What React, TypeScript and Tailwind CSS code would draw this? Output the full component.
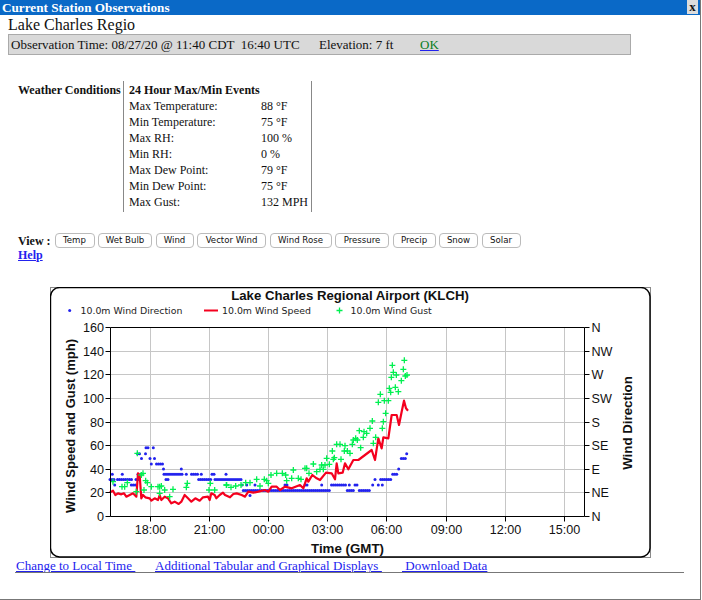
const serif = "font-['Liberation_Serif','Times_New_Roman',serif]";

const events = [
  ["Max Temperature:", "88 °F"],
  ["Min Temperature:", "75 °F"],
  ["Max RH:", "100 %"],
  ["Min RH:", "0 %"],
  ["Max Dew Point:", "79 °F"],
  ["Min Dew Point:", "75 °F"],
  ["Max Gust:", "132 MPH"],
];

const views = [
  { label: "Temp", width: "w-[40px]" },
  { label: "Wet Bulb", width: "w-[54px]" },
  { label: "Wind", width: "w-[38px]" },
  { label: "Vector Wind", width: "w-[69px]" },
  { label: "Wind Rose", width: "w-[62px]" },
  { label: "Pressure", width: "w-[54px]" },
  { label: "Precip", width: "w-[43px]" },
  { label: "Snow", width: "w-[39px]" },
  { label: "Solar", width: "w-[39px]" },
];

// plot coordinates are in page pixels, the svg viewBox starts at the card corner
const plot = { left: 110.5, right: 584.5, top: 327.5, bottom: 516.5 };
const hLines = [327.5, 351.5, 374.5, 398.5, 422.5, 445.5, 469.5, 492.5, 516.5];
const hours = [
  [150.5, "18:00"],
  [209.5, "21:00"],
  [268.5, "00:00"],
  [327.5, "03:00"],
  [386.5, "06:00"],
  [446.5, "09:00"],
  [505.5, "12:00"],
  [564.5, "15:00"],
] as const;
const speedLabels = ["160", "140", "120", "100", "80", "60", "40", "20", "0"];
const dirLabels = ["N", "NW", "W", "SW", "S", "SE", "E", "NE", "N"];

// wind direction: y, then runs of x start/end
const dirRuns: [number, number[]][] = [
  [447.7, [146, 148.5, 153.3, 153.3]],
  [453.7, [137.5, 140.5, 145.5, 145.5, 406.7, 406.7]],
  [458.5, [141.5, 143, 150, 150, 154.5, 154.5, 401.3, 405.7]],
  [464, [151.3, 151.3, 156.5, 163]],
  [469, [163.5, 163.5, 181.3, 181.3, 398.7, 398.7]],
  [474.3, [112.3, 112.3, 122.3, 122.3, 138, 138, 164, 183, 186.3, 186.3, 191.5, 198, 201.3, 201.3, 212, 215.5, 226, 226, 392.7, 396.7]],
  [479.5, [110, 114, 117.5, 131.5, 136, 138, 166, 169, 198.7, 211, 215, 241, 375, 375, 380.7, 391.7]],
  [485, [114.7, 114.7, 131.3, 136.3, 242, 242, 246.7, 246.7, 255, 255, 285, 288, 305, 308.3, 321.7, 321.7, 331.5, 346, 349.3, 349.3, 355, 357.3, 372.7, 372.7, 378.3, 378.3, 382.3, 382.3]],
  [490.5, [243.3, 330, 347.3, 355, 359.3, 370.7]],
  [495.5, [250, 250]],
];

const dirDots: [number, number][] = [];
for (const [y, runs] of dirRuns) {
  for (let i = 0; i < runs.length; i += 2) {
    for (let x = runs[i]; x <= runs[i + 1] + 0.1; x += 2) dirDots.push([x, y]);
  }
}

const toPage = (ox: number, oy: number, pts: number[][]) => pts.map(([x, y]) => [ox + x / 3, oy + y / 3]);

const speedLine = [
  ...toPage(108, 440, [
    [5, 158], [15, 152], [22, 165], [30, 160], [40, 163], [48, 160], [55, 170], [65, 165], [75, 160], [85, 170],
    [90, 100], [95, 105], [100, 175], [105, 165], [112, 172], [125, 175], [130, 182], [140, 175], [150, 180],
    [155, 165], [160, 180], [170, 170], [180, 175], [190, 190], [200, 185], [212, 192], [220, 185], [230, 165],
    [240, 175], [250, 185], [262, 175], [275, 182], [285, 172], [300, 170], [305, 180], [310, 160], [320, 165],
    [325, 175], [335, 165], [345, 158],
  ]),
  ...toPage(225, 440, [
    [0, 165], [15, 172], [25, 162], [35, 160], [50, 165], [60, 170], [70, 155], [85, 158], [100, 155], [120, 150],
    [130, 155], [140, 140], [155, 140], [165, 150], [180, 140], [200, 145], [225, 135], [235, 145], [245, 115],
    [250, 125], [262, 105], [275, 115],
  ]),
  ...toPage(320, 350, [
    [0, 390], [18, 368], [35, 370], [45, 388], [50, 340], [55, 370], [68, 368], [75, 340], [85, 358], [100, 330],
    [115, 330], [135, 315], [155, 300], [165, 330], [175, 265], [185, 295], [190, 262], [205, 265], [215, 195],
    [230, 195], [237, 225], [245, 185], [252, 152], [258, 175], [264, 182],
  ]),
];

const gusts = [
  ...toPage(108, 440, [
    [15, 125], [42, 140], [50, 140], [58, 128], [88, 40], [85, 155], [100, 105], [105, 100], [108, 150], [113, 122],
    [118, 128], [130, 140], [150, 140], [155, 140], [160, 138], [155, 160], [170, 150], [195, 148], [185, 170],
    [235, 142], [238, 130], [303, 150], [320, 150], [307, 130], [355, 135],
  ]),
  ...toPage(225, 440, [
    [5, 135], [18, 142], [32, 138], [48, 135], [62, 128], [75, 128], [95, 118], [105, 138], [118, 118], [125, 122],
    [130, 130], [138, 105], [155, 100], [172, 100], [182, 105], [185, 122], [205, 90], [200, 115], [220, 115],
    [228, 118], [240, 85], [245, 85], [252, 100], [265, 72], [275, 95],
  ]),
  ...toPage(320, 350, [
    [5, 345], [15, 345], [0, 358], [10, 358], [20, 325], [28, 343], [37, 303], [43, 323], [40, 328], [50, 283],
    [60, 283], [63, 328], [75, 287], [73, 303], [82, 303], [90, 310], [97, 283], [100, 270], [107, 265], [112, 270],
    [122, 293], [118, 242], [130, 262], [132, 245], [140, 250], [150, 235], [157, 213], [160, 280], [167, 262],
    [187, 235], [190, 215], [197, 190], [175, 157], [181, 133], [193, 152], [205, 152], [208, 115], [212, 127],
    [226, 112], [235, 125], [214, 82], [220, 67], [229, 75], [217, 46], [244, 92], [250, 58], [253, 31], [256, 78],
    [261, 75],
  ]),
];

function Plus({ x, y }: { x: number; y: number }) {
  return <path d={`M${x - 3} ${y}H${x + 3}M${x} ${y - 3}V${y + 3}`} stroke="#00f050" strokeWidth="1.3" fill="none" />;
}

function WindChart() {
  return (
    <svg viewBox="50 287 601 271" className="block h-[271px] w-[601px] font-['Liberation_Sans',Arial,sans-serif]">
      <rect x="50.5" y="287.5" width="600" height="270" fill="none" stroke="#8a8a8a" />
      <rect x="50.5" y="287.5" width="599.5" height="269.5" rx="9" fill="#fff" stroke="#000" strokeWidth="1.4" />

      <text x="350" y="299.5" textAnchor="middle" fontSize="13.2" fontWeight="700" fill="#111">
        Lake Charles Regional Airport (KLCH)
      </text>
      <g fontSize="9.4" fill="#222" className="font-['DejaVu_Sans',Verdana,sans-serif]">
        <text x="80.5" y="314">10.0m Wind Direction</text>
        <text x="222" y="314">10.0m Wind Speed</text>
        <text x="350.5" y="314">10.0m Wind Gust</text>
      </g>
      <circle cx="69.7" cy="310.4" r="1.5" fill="#2222ee" />
      <path d="M204 310.5H218" stroke="#f4001e" strokeWidth="2" />
      <Plus x={339.5} y={310.5} />

      {hLines.slice(1, -1).map((y) => (
        <path key={y} d={`M${plot.left} ${y}H${plot.right}`} stroke="#c6c6c6" />
      ))}
      {hours.map(([x]) => (
        <path key={x} d={`M${x} ${plot.top}V${plot.bottom}`} stroke="#c6c6c6" />
      ))}

      {dirDots.map(([x, y], i) => (
        <circle key={i} cx={x} cy={y} r="1.5" fill="#2222ee" />
      ))}
      <polyline
        points={speedLine.map((p) => p.join(",")).join(" ")}
        fill="none"
        stroke="#f4001e"
        strokeWidth="2.2"
        strokeLinejoin="round"
      />
      {gusts.map(([x, y], i) => (
        <Plus key={i} x={x} y={y} />
      ))}

      <path
        d={`M${plot.left} ${plot.top}V${plot.bottom}H${plot.right}V${plot.top}H${plot.left}`}
        fill="none"
        stroke="#000"
      />
      {hLines.map((y, i) => (
        <g key={y}>
          <path d={`M${plot.left - 5} ${y}H${plot.left}M${plot.right} ${y}H${plot.right + 5}`} stroke="#000" />
          <text x="104" y={y + 4.5} textAnchor="end" fontSize="12.6" fill="#111">
            {speedLabels[i]}
          </text>
          <text x="591.5" y={y + 4.5} fontSize="12.6" fill="#111">
            {dirLabels[i]}
          </text>
        </g>
      ))}
      {hours.map(([x, label]) => (
        <g key={label}>
          <path d={`M${x} ${plot.bottom}V${plot.bottom + 5}`} stroke="#000" />
          <text x={x} y="534" textAnchor="middle" fontSize="12.6" fill="#111">
            {label}
          </text>
        </g>
      ))}

      <text x="347.5" y="553" textAnchor="middle" fontSize="13.3" fontWeight="700" fill="#111">
        Time (GMT)
      </text>
      <text transform="translate(74.5 426) rotate(-90)" textAnchor="middle" fontSize="13" fontWeight="700" fill="#111">
        Wind Speed and Gust (mph)
      </text>
      <text transform="translate(631.5 423) rotate(-90)" textAnchor="middle" fontSize="13.3" fontWeight="700" fill="#111">
        Wind Direction
      </text>
    </svg>
  );
}

export default function App() {
  return (
    <div className={`${serif} relative flex h-[600px] w-[701px] flex-col border-r border-b border-[#777] bg-white text-[#111]`}>
      <div className="flex h-[15px] items-start justify-between bg-[#0a69c7] pr-[2px]">
        <span className="pl-[2px] text-[13.2px] leading-[15px] font-bold text-white">Current Station Observations</span>
        <span className="flex h-[14px] w-[11px] items-center justify-center bg-[#dcdcdc] text-[13px] font-bold">x</span>
      </div>

      <div className="ml-[8px] h-[19px] text-[16px] leading-[19px]">Lake Charles Regio</div>

      <div className="ml-[8px] flex h-[21px] w-[623px] items-center border border-[#aaa] bg-[#d9d9d9] pl-[2px] text-[13px] whitespace-pre">
        <span className="w-[308px]">Observation Time: 08/27/20 @ 11:40 CDT  16:40 UTC</span>
        <span className="w-[101px]">Elevation: 7 ft</span>
        <a href="#" className="text-[#0a7d22] underline decoration-[#2222ee]">OK</a>
      </div>

      <div className="mt-[26px] ml-[18px] flex h-[131px] text-[12px] leading-[16px]">
        <div className="w-[105px] font-bold whitespace-nowrap">
          <div className="pt-[1px]">Weather Conditions</div>
        </div>
        <div className="w-[189px] border-x border-[#888] pl-[5px]">
          <div className="pt-[1px] font-bold">24 Hour Max/Min Events</div>
          {events.map(([name, value]) => (
            <div key={name} className="flex">
              <span className="w-[132px]">{name}</span>
              <span>{value}</span>
            </div>
          ))}
        </div>
      </div>

      <div className="mt-[21px] ml-[18px] flex h-[15px] items-center gap-[3.5px]">
        <span className="mr-[1px] w-[32px] text-[12px] font-bold whitespace-nowrap">View :</span>
        {views.map((v) => (
          <button
            key={v.label}
            className={`${v.width} flex h-[15px] items-center justify-center rounded-[4px] border border-[#bbb] bg-white font-['DejaVu_Sans',Verdana,sans-serif] text-[8.6px]`}
          >
            {v.label}
          </button>
        ))}
      </div>

      <a href="#" className="ml-[18px] h-[16px] text-[12px] leading-[15px] font-bold text-[#2222ee] underline">Help</a>

      <div className="mt-[23px] ml-[50px]">
        <WindChart />
      </div>

      <div className="ml-[16px] flex h-[14px] text-[13px] leading-[15px] text-[#2222ee] underline whitespace-pre">
        <a href="#" className="w-[139px]">Change to Local Time </a>
        <a href="#" className="w-[247px]">Additional Tabular and Graphical Displays </a>
        <a href="#"> Download Data</a>
      </div>
      <div className="ml-[15px] h-px w-[669px] bg-[#777]" />
    </div>
  );
}
